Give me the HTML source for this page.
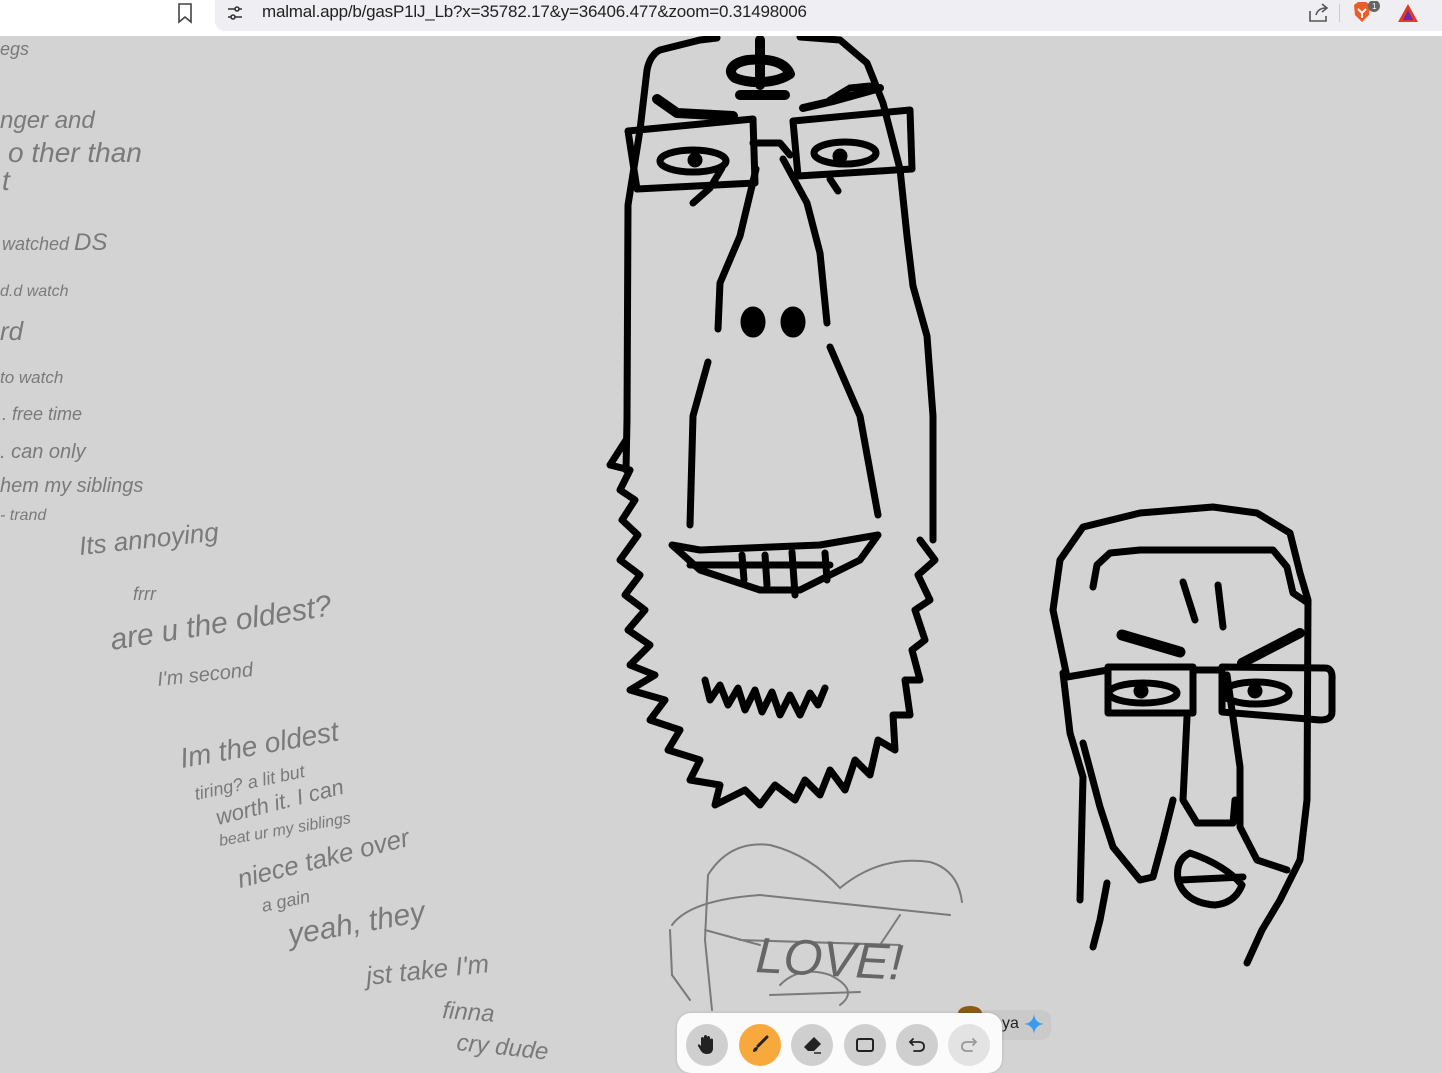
<!DOCTYPE html>
<html><head><meta charset="utf-8"><style>
html,body{margin:0;padding:0;width:1442px;height:1066px;overflow:hidden;background:#d3d3d3;font-family:"Liberation Sans",sans-serif}
.top{position:absolute;left:0;top:0;width:1442px;height:36px;background:#fff}
.pill{position:absolute;left:215px;top:0;width:1240px;height:31px;background:#efeef3;border-radius:0 0 0 10px}
.url{position:absolute;left:262px;top:2px;font-size:17px;color:#222;letter-spacing:-0.2px}
svg.c{position:absolute;left:0;top:0}
.tb{position:absolute;left:677px;top:1013px;width:325px;height:60px;background:#fbfbfb;border-radius:14px;box-shadow:0 0 3px rgba(0,0,0,.15)}
.b{position:absolute;top:11px;width:42px;height:42px;border-radius:50%;background:#cfcfcf;display:flex;align-items:center;justify-content:center}
.ya{position:absolute;left:960px;top:1010px;width:91px;height:30px;background:#cacaca;border-radius:10px}
.hw{font-family:"Liberation Sans",sans-serif;font-style:italic;fill:#7a7a7a}
</style></head><body>
<svg class="c" width="1442" height="1066" viewBox="0 0 1442 1066">
<g fill="none" stroke="#000" stroke-width="7" stroke-linecap="round" stroke-linejoin="round">
<path d="M717,38 L700,40 L660,50 Q650,55 647,70 L640,130 L628,205 L627,420 L626,470"/>
<path d="M800,37 L840,40 L867,63 L883,103 L900,169 L907,236 L913,286 L927,336 L933,416 L933,540"/>
<path d="M748,60 C735,62 725,70 735,78 C750,84 775,84 790,74 C785,62 770,58 748,60 Z M760,40 L760,85 M740,95 L785,95" stroke-width="10"/>
<path d="M628,131 L753,119 L755,183 L637,189 Z"/>
<path d="M793,121 L910,110 L912,169 L798,176 Z"/>
<path d="M753,143 L780,143 L790,155"/>
<path d="M657,99 L677,113 L733,116" stroke-width="10"/>
<path d="M803,108 L833,101 L880,88" stroke-width="8"/>
<path d="M830,100 L850,88 L870,86"/>
<ellipse cx="693" cy="161" rx="33" ry="11"/>
<ellipse cx="845" cy="153" rx="31" ry="11"/>
<circle cx="695" cy="160" r="4" fill="#000"/><circle cx="840" cy="156" r="4" fill="#000"/>
<path d="M693,203 L710,188 L722,168"/>
<path d="M830,179 L838,191"/>
<path d="M756,169 L740,236 L720,283 L718,329"/>
<path d="M783,159 L807,203 L820,253 L827,323"/>
<ellipse cx="753" cy="322" rx="9" ry="12" fill="#000"/>
<ellipse cx="793" cy="322" rx="9" ry="12" fill="#000"/>
<path d="M708,362 L693,416 L690,525"/>
<path d="M830,347 L860,416 L878,515"/>
<path d="M672,545 L700,570 L760,590 L800,590 L860,560 L878,535 L820,545 L700,550 Z"/>
<path d="M690,565 L830,565 M742,555 L744,580 M765,555 L767,585 M792,552 L795,595 M825,553 L827,580"/>
<path d="M626,440 L610,465 L630,470 L620,490 L635,500 L622,520 L638,535 L620,560 L640,575 L625,595 L645,610 L628,630 L650,645 L630,665 L655,675 L630,690 L665,700 L650,720 L680,730 L668,750 L700,760 L690,780 L720,785 L715,805 L745,790 L760,805 L775,785 L795,800 L805,780 L820,795 L830,770 L845,790 L855,760 L870,775 L878,740 L895,750 L893,715 L910,715 L905,680 L920,680 L912,650 L925,640 L915,610 L930,600 L918,575 L935,560 L920,540"/>
<path d="M705,680 L710,700 L720,685 L728,705 L738,688 L745,710 L755,690 L762,712 L772,692 L780,715 L790,695 L800,715 L810,693 L818,705 L825,688"/>
<path d="M1067,677 L1053,610 L1060,560 L1083,527 L1140,513 L1213,507 L1257,513 L1290,533 L1300,573 L1308,600 L1307,800 L1300,860 L1280,900 L1262,930 L1247,963"/>
<path d="M1093,587 L1097,565 L1110,553 L1140,550 L1273,550 L1287,567 L1293,593 L1308,603"/>
<path d="M1063,673 L1070,733 L1083,777 L1080,900"/>
<path d="M1083,743 L1100,807 L1113,847 L1140,880 L1153,877 L1163,840 L1173,800"/>
<path d="M1107,883 L1100,920 L1093,947"/>
<path d="M1067,677 L1108,670"/>
<path d="M1108,667 L1193,667 L1193,713 L1108,713 Z"/>
<path d="M1222,667 L1325,668 Q1333,668 1332,680 L1332,712 Q1332,720 1320,720 L1222,712 Z"/>
<path d="M1193,670 L1222,670"/>
<ellipse cx="1143" cy="693" rx="34" ry="10"/>
<ellipse cx="1256" cy="693" rx="33" ry="11"/>
<circle cx="1141" cy="691" r="4" fill="#000"/><circle cx="1255" cy="691" r="4" fill="#000"/>
<path d="M1122,635 L1180,652" stroke-width="11"/>
<path d="M1242,663 L1300,633" stroke-width="10"/>
<path d="M1183,582 L1195,620 M1218,585 L1223,627"/>
<path d="M1187,717 L1183,800 L1197,823 L1233,823 L1235,800"/>
<path d="M1227,675 L1240,767 L1240,827 L1257,860 L1287,870"/>
<path d="M1190,853 Q1175,860 1178,880 Q1185,903 1215,905 Q1235,903 1242,885 Q1225,865 1190,853 Z M1180,880 L1243,877"/>
</g>
<g fill="none" stroke="#7a7a7a" stroke-width="2" stroke-linecap="round">
<path d="M712,1010 L705,940 L708,875 Q730,840 770,845 Q810,855 840,888 Q880,855 930,862 Q958,870 962,902"/>
<path d="M672,925 Q690,900 760,895 L950,915"/>
<path d="M670,930 L672,975 L690,1000"/>
<path d="M705,930 L760,945 M740,940 L900,945 M770,995 L860,992"/>
<path d="M780,985 Q800,965 830,975 Q860,990 840,1005"/>
<path d="M880,945 L900,915"/>
</g>
<text x="755" y="972" font-size="50" fill="#666" font-family="Liberation Sans" style="font-style:italic" transform="rotate(3 755 972)">LOVE!</text>
<g class="hw">
<text x="0" y="55" font-size="18">egs</text>
<text x="0" y="128" font-size="24">nger  and</text>
<text x="8" y="162" font-size="28">o ther than</text>
<text x="2" y="190" font-size="28">t</text>
<text x="2" y="250" font-size="18">watched  <tspan font-size="24">DS</tspan></text>
<text x="0" y="296" font-size="16">d.d   watch</text>
<text x="0" y="340" font-size="26">rd</text>
<text x="0" y="383" font-size="17">to  watch</text>
<text x="2" y="420" font-size="18">. free time</text>
<text x="0" y="458" font-size="20">.  can    only</text>
<text x="0" y="492" font-size="20">hem  my  siblings</text>
<text x="0" y="520" font-size="16">-  trand</text>
<text x="80" y="555" font-size="26" transform="rotate(-6 80 555)">Its   annoying</text>
<text x="133" y="600" font-size="18">frrr</text>
<text x="112" y="650" font-size="30" transform="rotate(-9 112 650)">are u the oldest?</text>
<text x="158" y="686" font-size="20" transform="rotate(-6 158 686)">I'm   second</text>
<text x="182" y="768" font-size="28" transform="rotate(-10 182 768)">Im the oldest</text>
<text x="196" y="800" font-size="18" transform="rotate(-12 196 800)">tiring? a lit but</text>
<text x="218" y="825" font-size="22" transform="rotate(-14 218 825)">worth it. I can</text>
<text x="220" y="846" font-size="16" transform="rotate(-10 220 846)">beat ur   my siblings</text>
<text x="240" y="888" font-size="26" transform="rotate(-14 240 888)">niece take over</text>
<text x="263" y="912" font-size="18" transform="rotate(-12 263 912)">a gain</text>
<text x="290" y="945" font-size="30" transform="rotate(-10 290 945)">yeah, they</text>
<text x="367" y="985" font-size="26" transform="rotate(-6 367 985)">jst take I'm</text>
<text x="442" y="1018" font-size="24" transform="rotate(4 442 1018)">finna</text>
<text x="456" y="1050" font-size="24" transform="rotate(6 456 1050)">cry dude</text>
</g>
</svg>
<div class="top">
 <svg style="position:absolute;left:176px;top:2px" width="18" height="22" viewBox="0 0 18 22"><path d="M3,2 H15 V20 L9,15 L3,20 Z" fill="none" stroke="#444" stroke-width="1.6"/></svg>
 <div class="pill"></div>
 <svg style="position:absolute;left:226px;top:4px" width="18" height="18" viewBox="0 0 18 18"><g stroke="#333" stroke-width="1.6" fill="none"><path d="M2,5 H9 M13,5 H16 M2,13 H5 M9,13 H16"/><circle cx="11" cy="5" r="2"/><circle cx="7" cy="13" r="2"/></g></svg>
 <div class="url">malmal.app/b/gasP1lJ_Lb?x=35782.17&amp;y=36406.477&amp;zoom=0.31498006</div>
 <svg style="position:absolute;left:1308px;top:3px" width="22" height="20" viewBox="0 0 22 20"><path d="M2,8 V18 H18 V13 M8,12 Q10,5 18,5 M14,1 L19,5 L14,9" fill="none" stroke="#555" stroke-width="1.6"/></svg>
 <div style="position:absolute;left:1339px;top:4px;width:1px;height:18px;background:#ccc"></div>
 <svg style="position:absolute;left:1352px;top:1px" width="30" height="24" viewBox="0 0 30 24"><path d="M2,4 L6,1 H14 L18,4 L17,14 L10,21 L3,14 Z" fill="#f05a24"/><path d="M6,8 L10,12 L14,8 M10,12 V17" stroke="#fff" stroke-width="2" fill="none"/><circle cx="22" cy="5" r="6" fill="#666"/><text x="20" y="8" font-size="8" fill="#fff" font-family="Liberation Sans">1</text></svg>
 <svg style="position:absolute;left:1396px;top:2px" width="24" height="22" viewBox="0 0 24 22"><path d="M12,2 L22,20 H2 Z" fill="#e03a2a"/><path d="M12,8 L17,18 H7 Z" fill="#6b2ca0"/></svg>
</div>
<div class="ya">
 <div style="position:absolute;left:-2px;top:-4px;width:24px;height:14px;border-radius:50% 50% 0 0;background:#8a5a1a"></div>
 <span style="position:absolute;left:42px;top:5px;font-size:16px;color:#222">ya</span>
 <svg style="position:absolute;left:63px;top:3px" width="22" height="22" viewBox="0 0 22 22"><path d="M11,1 Q12,10 21,11 Q12,12 11,21 Q10,12 1,11 Q10,10 11,1 Z" fill="#3a9cf0"/></svg>
</div>
<div class="tb">
 <div class="b" style="left:9px"><svg width="22" height="22" viewBox="0 0 22 22"><path d="M5,12 V5 Q5,3 6.5,3 Q8,3 8,5 V3 Q8,1 9.5,1 Q11,1 11,3 V3.5 Q11,2 12.5,2 Q14,2 14,4 V6 Q14,4.5 15.5,4.5 Q17,4.5 17,6 V14 Q17,20 11,20 Q7,20 5,17 L2,12 Q1.5,10 3.5,10.5 Z" fill="#222"/></svg></div>
 <div class="b" style="left:62px;background:#f8a93e"><svg width="22" height="22" viewBox="0 0 22 22"><path d="M18,3 L9,12" stroke="#222" stroke-width="3" stroke-linecap="round"/><path d="M8,13 Q4,13 4,18 Q8,18 9,14 Z" fill="#222"/></svg></div>
 <div class="b" style="left:114px"><svg width="22" height="22" viewBox="0 0 22 22"><path d="M13,3 L20,10 L13,17 H7 L3,13 Z" fill="#222"/><path d="M13,19 H20" stroke="#222" stroke-width="1.5"/></svg></div>
 <div class="b" style="left:167px"><svg width="22" height="22" viewBox="0 0 22 22"><rect x="3" y="5" width="16" height="12" rx="2" fill="none" stroke="#222" stroke-width="2"/></svg></div>
 <div class="b" style="left:219px"><svg width="22" height="22" viewBox="0 0 22 22"><path d="M7,5 L4,8 L7,11 M4,8 H13 Q18,8 18,12.5 Q18,17 13,17 H8" fill="none" stroke="#222" stroke-width="1.8" stroke-linecap="round"/></svg></div>
 <div class="b" style="left:271px;background:#e3e3e3"><svg width="22" height="22" viewBox="0 0 22 22"><path d="M15,5 L18,8 L15,11 M18,8 H9 Q4,8 4,12.5 Q4,17 9,17 H14" fill="none" stroke="#999" stroke-width="1.8" stroke-linecap="round"/></svg></div>
</div>
</body></html>
